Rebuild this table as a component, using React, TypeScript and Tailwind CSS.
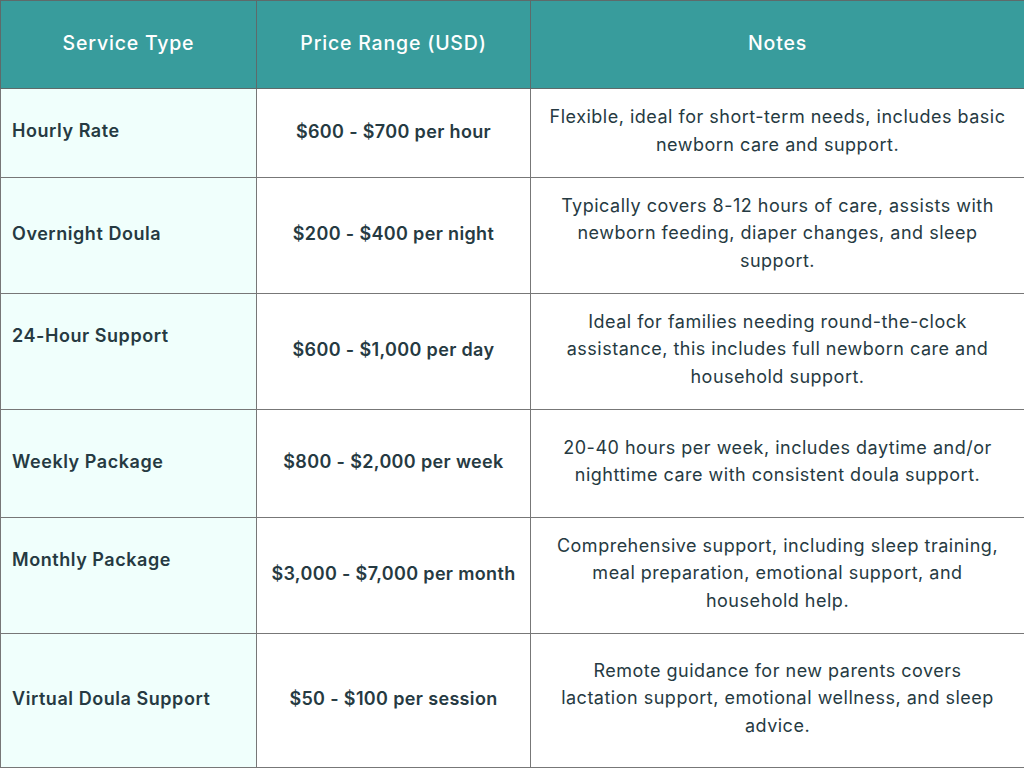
import React from "react";

const rows = [
  { h: 89, name: "Hourly Rate", price: "$600 - $700 per hour", notes: ["Flexible, ideal for short-term needs, includes basic", "newborn care and support."] },
  { h: 116, name: "Overnight Doula", price: "$200 - $400 per night", notes: ["Typically covers 8-12 hours of care, assists with", "newborn feeding, diaper changes, and sleep", "support."] },
  { h: 116, name: "24-Hour Support", price: "$600 - $1,000 per day", notes: ["Ideal for families needing round-the-clock", "assistance, this includes full newborn care and", "household support."], nameTop: true },
  { h: 108, name: "Weekly Package", price: "$800 - $2,000 per week", notes: ["20-40 hours per week, includes daytime and/or", "nighttime care with consistent doula support."] },
  { h: 116, name: "Monthly Package", price: "$3,000 - $7,000 per month", notes: ["Comprehensive support, including sleep training,", "meal preparation, emotional support, and", "household help."], nameTop: true },
  { h: 134, name: "Virtual Doula Support", price: "$50 - $100 per session", notes: ["Remote guidance for new parents covers", "lactation support, emotional wellness, and sleep", "advice."] },
];

export default function App() {
  return (
    <div className="w-[1024px] h-[768px] bg-white overflow-hidden text-[#263a42]" style={{ fontFamily: "Inter, 'Open Sans', sans-serif" }}>
      <table className="w-[1024px] border-collapse table-fixed">
        <colgroup>
          <col className="w-[256px]" />
          <col className="w-[274px]" />
          <col className="w-[494px]" />
        </colgroup>
        <thead>
          <tr className="h-[88px] bg-[#389c9c] text-white text-[19.5px] tracking-[0.8px] font-medium">
            <th className="border border-[#5e6a6a] font-medium text-center pb-[2px]">Service Type</th>
            <th className="border border-[#5e6a6a] font-medium text-center pb-[2px]">Price Range (USD)</th>
            <th className="border border-[#5e6a6a] font-medium text-center pb-[2px]">Notes</th>
          </tr>
        </thead>
        <tbody>
          {rows.map((r) => (
            <tr key={r.name} style={{ height: r.h }}>
              <td className={`border border-[#777] bg-[#f0fffc] pl-[11px] text-[18px] tracking-[0.55px] font-semibold ${r.nameTop ? "align-top pt-[28px]" : "align-middle pb-[5px]"}`}>
                {r.name}
              </td>
              <td className="border border-[#777] text-center text-[18px] tracking-[0.35px] font-semibold align-middle pb-[4px]">{r.price}</td>
              <td className="border border-[#777] text-center text-[18px] tracking-[0.5px] leading-[27.5px] align-middle pb-[5px]">
                {r.notes.map((l, i) => (
                  <div key={i} className="whitespace-nowrap">{l}</div>
                ))}
              </td>
            </tr>
          ))}
        </tbody>
      </table>
    </div>
  );
}
